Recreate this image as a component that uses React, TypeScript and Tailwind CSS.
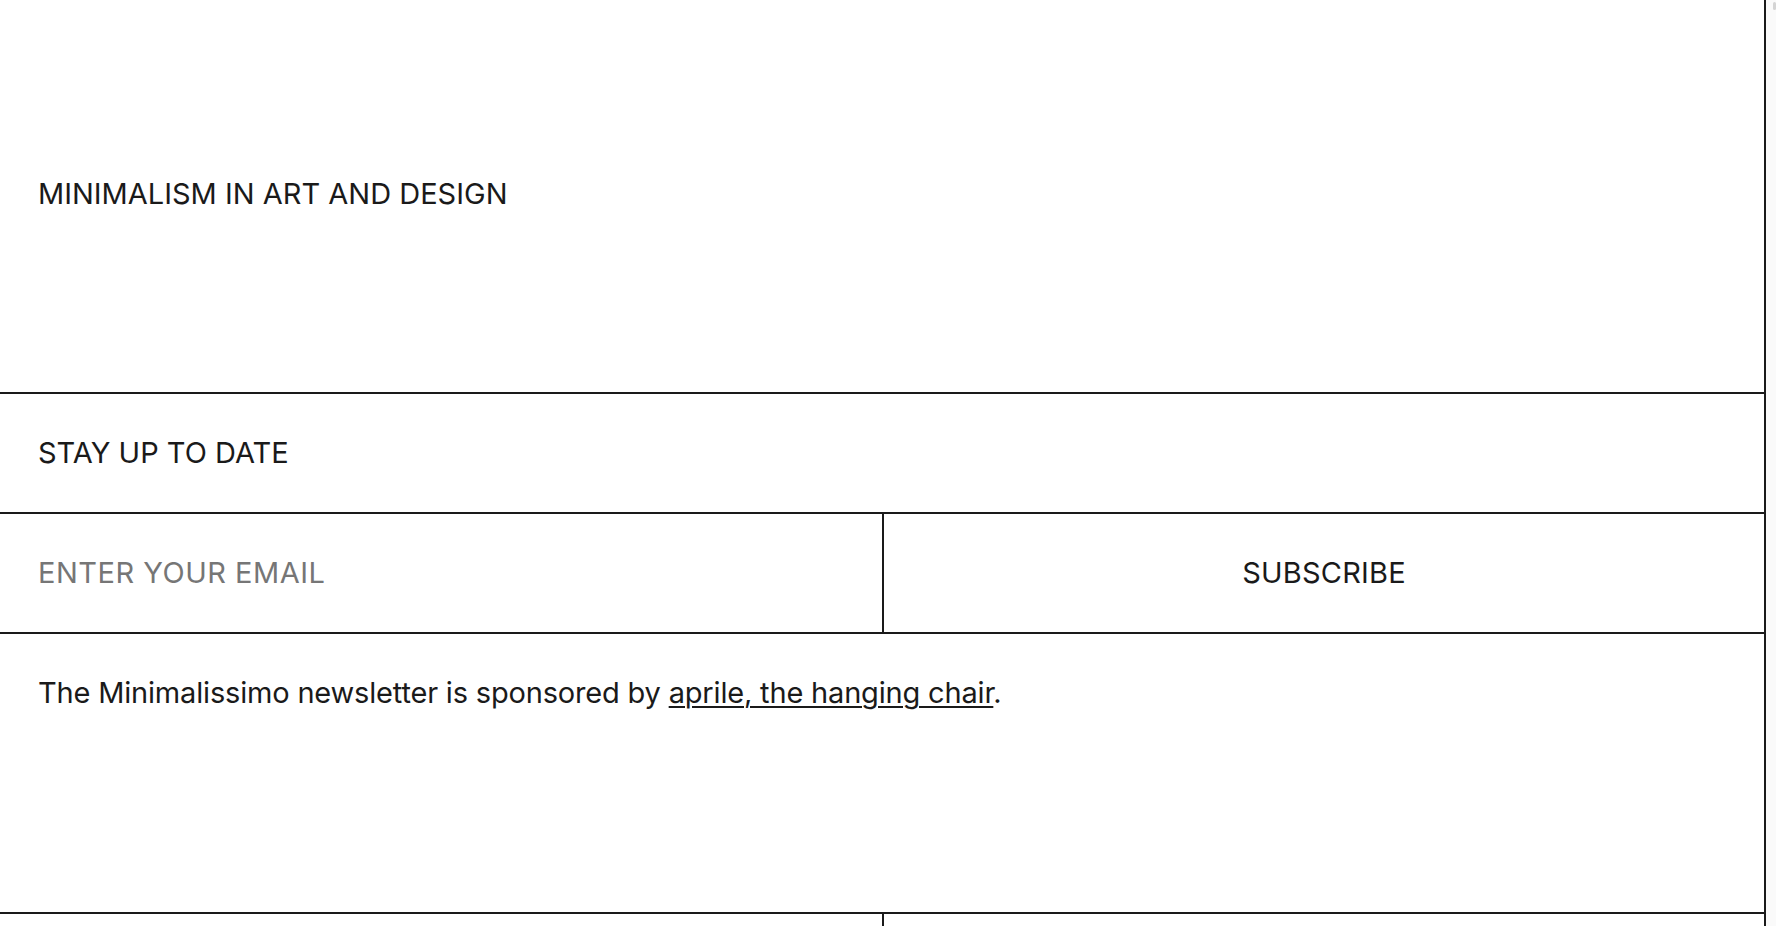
import React from "react";

const line = "border-[#1a1a1a]";

export default function App() {
  return (
    <div className="min-h-screen flex bg-white text-[#1a1a1a] font-['Inter','Liberation_Sans',sans-serif]">
      <div className={`flex-1 border-r-2 ${line} text-[29px] leading-[44px]`}>
        {/* hero */}
        <section className={`h-[394px] flex items-center px-[38px] pb-[4px] border-b-2 ${line}`}>
          <h1 className="font-normal">MINIMALISM IN ART AND DESIGN</h1>
        </section>

        {/* newsletter */}
        <section className={`px-[38px] py-[37px] border-b-2 ${line}`}>
          <h2>STAY UP TO DATE</h2>
        </section>

        <form className={`grid grid-cols-2 border-b-2 ${line}`} onSubmit={(e) => e.preventDefault()}>
          <input
            type="email"
            placeholder="ENTER YOUR EMAIL"
            className="px-[38px] py-[37px] tracking-[0.5px] outline-none placeholder:text-[#767676] bg-transparent"
          />
          <button type="submit" className={`py-[37px] text-center tracking-[0.2px] border-l-2 ${line}`}>
            SUBSCRIBE
          </button>
        </form>

        <section className={`h-[280px] px-[38px] py-[37px] border-b-2 ${line}`}>
          <p className="tracking-[-0.18px]">
            The Minimalissimo newsletter is sponsored by{" "}
            <a href="#" className="underline underline-offset-[3px] decoration-[2px]">
              aprile, the hanging chair
            </a>
            .
          </p>
        </section>

        {/* footer */}
        <footer className="grid grid-cols-2">
          <div className="h-[240px] px-[38px] py-[37px]" />
          <div className={`h-[240px] px-[38px] py-[37px] border-l-2 ${line}`} />
        </footer>
      </div>
      {/* scrollbar track */}
      <div className="w-[10px] shrink-0 bg-[#fafafa]">
        <div className="mt-[2px] ml-[7px] w-[3px] h-[8px] rounded-full bg-[#d4d4d4]" />
      </div>
    </div>
  );
}
